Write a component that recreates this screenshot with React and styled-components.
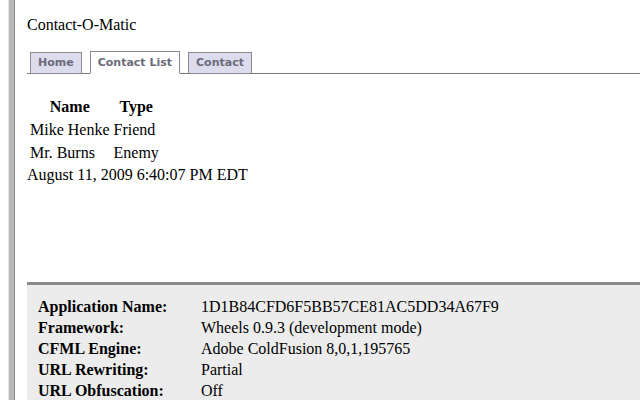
import React from "react";
import styled, { createGlobalStyle } from "styled-components";

const Global = createGlobalStyle`
  html, body { margin: 0; padding: 0; background: #fff; }
  body { font-family: "Liberation Serif", "Times New Roman", serif; color: #000; }
`;

const Page = styled.div`
  display: flex;
  height: 400px;
  overflow: hidden;
`;

const FrameEdge = styled.div`
  flex: none;
  margin-left: 8px;
  width: 5px;
  background: #b8b8b8;
  border-left: 1px solid #e4e4e4;
  border-right: 1px solid #8a8a8a;
`;

const Main = styled.div`
  flex: 1;
  padding-left: 12px;
  min-width: 0;
`;

const Title = styled.div`
  font-size: 16px;
  line-height: 18px;
  padding-top: 16px;
`;

const TabBar = styled.ul`
  list-style: none;
  margin: 18px 0 0;
  padding: 0 0 0 3px;
  display: flex;
  gap: 8px;
  border-bottom: 1px solid #7a7a7a;
`;

const Tab = styled.li`
  margin-bottom: -1px;
  padding: 0 7px;
  border: 1px solid #8a8a8a;
  border-bottom-color: ${(p) => (p.$active ? "#fff" : "#8a8a8a")};
  background: ${(p) => (p.$active ? "#fff" : "#dcdcec")};
  color: #6b6b7b;
  font-family: "DejaVu Sans", Verdana, sans-serif;
  font-weight: bold;
  font-size: 11px;
  margin-top: ${(p) => (p.$active ? "-1px" : "0")};
  height: ${(p) => (p.$active ? "21px" : "20px")};
  line-height: ${(p) => (p.$active ? "22px" : "20px")};
`;

const Table = styled.table`
  margin-top: 20px;
  border-spacing: 2px;
  font-size: 16px;
  th, td { padding: 1px; line-height: 19px; }
  th { font-weight: bold; text-align: center; }
  td { text-align: left; }
`;

const DateLine = styled.div`
  font-size: 16px;
  line-height: 19px;
`;

const Debug = styled.div`
  margin-top: 98px;
  border-top: 3px solid #8a8a8a;
  background: #ececec;
  padding: 11px 0 20px 11px;
  display: grid;
  grid-template-columns: 163px 1fr;
  font-size: 16px;
  line-height: 21px;
`;

const Label = styled.div`
  font-weight: bold;
`;

const Value = styled.div``;

const contacts = [
  { name: "Mike Henke", type: "Friend" },
  { name: "Mr. Burns", type: "Enemy" },
];

const info = [
  ["Application Name:", "1D1B84CFD6F5BB57CE81AC5DD34A67F9"],
  ["Framework:", "Wheels 0.9.3 (development mode)"],
  ["CFML Engine:", "Adobe ColdFusion 8,0,1,195765"],
  ["URL Rewriting:", "Partial"],
  ["URL Obfuscation:", "Off"],
];

export default function App() {
  return (
    <Page>
      <Global />
      <FrameEdge />
      <Main>
        <Title>Contact-O-Matic</Title>
        <TabBar>
          <Tab>Home</Tab>
          <Tab $active>Contact List</Tab>
          <Tab>Contact</Tab>
        </TabBar>
        <Table>
          <thead>
            <tr>
              <th>Name</th>
              <th>Type</th>
            </tr>
          </thead>
          <tbody>
            {contacts.map((c) => (
              <tr key={c.name}>
                <td>{c.name}</td>
                <td>{c.type}</td>
              </tr>
            ))}
          </tbody>
        </Table>
        <DateLine>August 11, 2009 6:40:07 PM EDT</DateLine>
        <Debug>
          {info.map(([k, v]) => (
            <React.Fragment key={k}>
              <Label>{k}</Label>
              <Value>{v}</Value>
            </React.Fragment>
          ))}
        </Debug>
      </Main>
    </Page>
  );
}
